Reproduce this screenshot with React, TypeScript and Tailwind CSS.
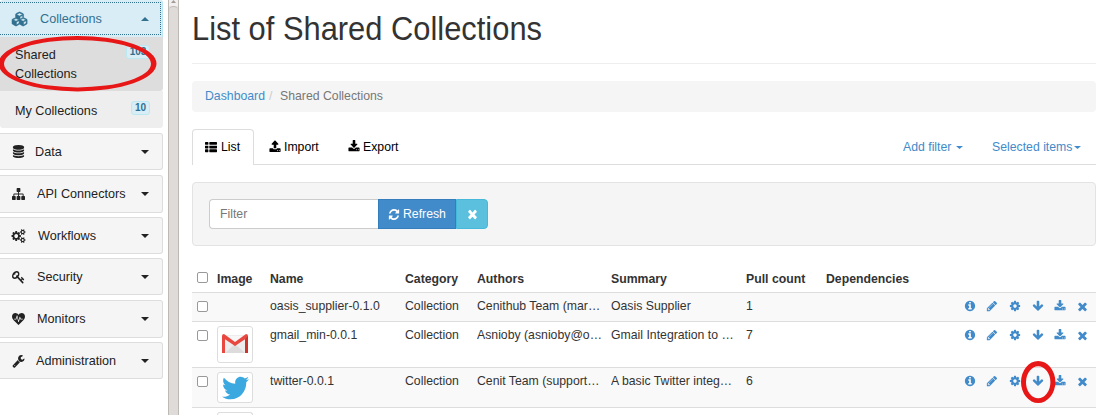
import React from "react";
import { FaTwitter } from "react-icons/fa";

const COG_LARGE =
  "M832 896q0-106-75-181t-181-75-181 75-75 181 75 181 181 75 181-75 75-181zm768 512q0-52-38-90t-90-38-90 38-38 90q0 53 37.5 90.5t90.5 37.5 90.5-37.5 37.5-90.5zm0-1024q0-52-38-90t-90-38-90 38-38 90q0 53 37.5 90.5t90.5 37.5 90.5-37.5 37.5-90.5zm-384 421v185q0 10-7 19.5t-16 10.5l-155 24q-11 35-32 76 34 48 90 115 7 11 7 20 0 12-7 19-23 30-82.5 89.5t-78.5 59.5q-11 0-21-7l-115-90q-37 19-77 31-11 108-23 155-7 24-30 24h-186q-11 0-20-7.5t-10-17.5l-23-153q-34-10-75-31l-118 89q-7 7-20 7-11 0-21-8-144-133-144-160 0-9 7-19 10-14 41-53t47-61q-23-44-35-82l-152-24q-10-1-17-9.5t-7-19.5v-185q0-10 7-19.5t16-10.5l155-24q11-35 32-76-34-48-90-115-7-11-7-20 0-12 7-20 22-30 82-89t79-59q11 0 21 7l115 90q34-18 77-32 11-108 23-154 7-24 30-24h186q11 0 20 7.5t10 17.5l23 153q34 10 75 31l118-89q8-7 20-7 11 0 21 8 144 133 144 160 0 8-7 19-12 16-42 54t-45 60q23 48 34 82l152 23q10 2 17 10.5t7 19.5z";
const COG_SMALL =
  "v140q0 16-149 31-12 27-30 52 51 113 51 138 0 4-4 7-122 71-124 71-8 0-46-47t-52-68q-20 2-30 2t-30-2q-14 21-52 68t-46 47q-2 0-124-71-4-3-4-7 0-25 51-138-18-25-30-52-149-15-149-31v-140q0-16 149-31 13-29 30-52-51-113-51-138 0-4 4-7 4-2 35-20t59-34 30-16q8 0 46 46.5t52 67.5q20-2 30-2t30 2q51-71 92-112l6-2q4 0 124 70 4 3 4 7 0 25-51 138 17 23 30 52 149 15 149 31z";
const DISC = "q237 0 443-43t325-127v170q0 69-103 128t-280 93.5-385 34.5-385-34.5-280-93.5-103-128v-170q119 84 325 127t443 43z";

const ICONS = {
  cubes: {
    w: 2304,
    d: "M640 1632l384-192v-314l-384 164v342zm-64-454l404-173-404-173-404 173zm1088 454l384-192v-314l-384 164v342zm-64-454l404-173-404-173-404 173zm-448-293l384-165v-266l-384 164v267zm-64-379l441-189-441-189-441 189zm1088 518v416q0 36-19 67t-52 47l-448 224q-25 14-57 14t-57-14l-448-224q-4-2-7-4-2 2-7 4l-448 224q-25 14-57 14t-57-14l-448-224q-33-16-52-47t-19-67v-416q0-38 21.5-70t56.5-48l434-186v-400q0-38 21.5-70t56.5-48l448-192q23-10 50-10t50 10l448 192q35 16 56.5 48t21.5 70v400l434 186q36 16 57 48t21 70z",
  },
  database: {
    w: 1792,
    d: `M896 768${DISC}M896 1536${DISC}M896 1152${DISC}M896 0q208 0 385 34.5t280 93.5 103 128v128q0 69-103 128t-280 93.5-385 34.5-385-34.5-280-93.5-103-128v-128q0-69 103-128t280-93.5 385-34.5z`,
  },
  sitemap: {
    w: 1792,
    d: "M1792 1248v320q0 40-28 68t-68 28h-320q-40 0-68-28t-28-68v-320q0-40 28-68t68-28h96v-192h-512v192h96q40 0 68 28t28 68v320q0 40-28 68t-68 28h-320q-40 0-68-28t-28-68v-320q0-40 28-68t68-28h96v-192h-512v192h96q40 0 68 28t28 68v320q0 40-28 68t-68 28h-320q-40 0-68-28t-28-68v-320q0-40 28-68t68-28h96v-192q0-52 38-90t90-38h512v-192h-96q-40 0-68-28t-28-68v-320q0-40 28-68t68-28h320q40 0 68 28t28 68v320q0 40-28 68t-68 28h-96v192h512q52 0 90 38t38 90v192h96q40 0 68 28t28 68z",
  },
  cogs: { w: 1920, d: `${COG_LARGE}M1856 1338${COG_SMALL}M1856 314${COG_SMALL}` },
  key: {
    w: 1792,
    d: "M832 512q0-80-56-136t-136-56-136 56-56 136q0 42 19 83-41-19-83-19-80 0-136 56t-56 136 56 136 136 56 136-56 56-136q0-42-19-83 41 19 83 19 80 0 136-56t56-136zm851 704q0 17-49 66t-66 49q-9 0-28.5-16t-36.5-33-38.5-40-24.5-26l-96 96 220 220q28 28 28 68 0 42-39 81t-81 39q-40 0-68-28l-671-671q-176 131-365 131-163 0-265.5-102.5t-102.5-265.5q0-160 95-313t248-248 313-95q163 0 265.5 102.5t102.5 265.5q0 189-131 365l355 355 96-96q-3-3-26-24.5t-40-38.5-33-36.5-16-28.5q0-17 49-66t66-49q13 0 23 10 6 6 46 44.5t82 79.5 86.5 86 73 78 28.5 41z",
  },
  heartbeat: {
    w: 1792,
    d: "M896 1664q-26 0-44-18l-624-602Q0 790 0 596 0 376 127 252t351-124q62 0 126.5 21.5t120 58 95.5 68.5 76 68q36-36 76-68t95.5-68.5 120-58 126.5-21.5q224 0 351 124t127 344q0 221-229 450l-623 600q-18 18-44 18zM300 860V960H600L700 640L860 1290L940 1290L1090 790L1160 960H1480V860H1220L1110 600H1050L900 1080L740 440H660L530 860Z",
  },
  wrench: {
    w: 1792,
    d: "M448 1472q0-26-19-45t-45-19-45 19-19 45 19 45 45 19 45-19 19-45zm644-420l-682 682q-37 37-90 37-52 0-91-37l-106-108q-38-36-38-90 0-53 38-91l681-681q39 98 114.5 173.5t173.5 114.5zm634-435q0 39-23 106-47 134-164.5 217.5t-258.5 83.5q-185 0-316.5-131.5t-131.5-316.5 131.5-316.5 316.5-131.5q58 0 121.5 16.5t107.5 46.5q16 11 16 28t-16 28l-293 169v224l193 107q5-3 79-48.5t135.5-81 70.5-35.5q15 0 23.5 10t8.5 25z",
  },
  list: {
    w: 1792,
    d: [224, 736, 1248]
      .map(
        (y) =>
          `M512 ${y}v192q0 40-28 68t-68 28h-320q-40 0-68-28t-28-68v-192q0-40 28-68t68-28h320q40 0 68 28t28 68zM1792 ${y}v192q0 40-28 68t-68 28h-960q-40 0-68-28t-28-68v-192q0-40 28-68t68-28h960q40 0 68 28t28 68z`,
      )
      .join(""),
  },
  upload: {
    w: 1792,
    d: "M1344 1472q0-26-19-45t-45-19-45 19-19 45 19 45 45 19 45-19 19-45zm256 0q0-26-19-45t-45-19-45 19-19 45 19 45 45 19 45-19 19-45zm128-224v320q0 40-28 68t-68 28h-1472q-40 0-68-28t-28-68v-320q0-40 28-68t68-28h427q21 56 70.5 92t110.5 36h256q61 0 110.5-36t70.5-92h427q40 0 68 28t28 68zm-325-648q-17 40-59 40h-256v448q0 26-19 45t-45 19h-256q-26 0-45-19t-19-45v-448h-256q-42 0-59-40-17-39 14-69l448-448q18-19 45-19t45 19l448 448q31 30 14 69z",
  },
  download: {
    w: 1792,
    d: "M1344 1344q0-26-19-45t-45-19-45 19-19 45 19 45 45 19 45-19 19-45zm256 0q0-26-19-45t-45-19-45 19-19 45 19 45 45 19 45-19 19-45zm128-224v320q0 40-28 68t-68 28h-1472q-40 0-68-28t-28-68v-320q0-40 28-68t68-28h465l135 136q58 56 136 56t136-56l136-136h464q40 0 68 28t28 68zm-325-569q17 41-14 70l-448 448q-18 19-45 19t-45-19l-448-448q-31-29-14-70 17-39 59-39h256v-448q0-26 19-45t45-19h256q26 0 45 19t19 45v448h256q42 0 59 39z",
  },
  refresh: {
    w: 1792,
    d: "M1639 1056q0 5-1 7-64 268-268 434.5t-478 166.5q-146 0-282.5-55t-243.5-157l-129 129q-19 19-45 19t-45-19-19-45v-448q0-26 19-45t45-19h448q26 0 45 19t19 45-19 45l-137 137q71 66 161 102t187 36q134 0 250-65t186-179q11-17 53-117 8-23 30-23h192q13 0 22.5 9.5t9.5 22.5zm25-800v448q0 26-19 45t-45 19h-448q-26 0-45-19t-19-45 19-45l138-138q-148-137-349-137-134 0-250 65t-186 179q-11 17-53 117-8 23-30 23h-199q-13 0-22.5-9.5t-9.5-22.5v-7q65-268 270-434.5t480-166.5q146 0 284 55.5t245 156.5l130-129q19-19 45-19t45 19 19 45z",
  },
  times: {
    w: 1792,
    d: "M1490 1322q0 40-28 68l-136 136q-28 28-68 28t-68-28l-294-294-294 294q-28 28-68 28t-68-28l-136-136q-28-28-28-68t28-68l294-294-294-294q-28-28-28-68t28-68l136-136q28-28 68-28t68 28l294 294 294-294q28-28 68-28t68 28l136 136q28 28 28 68t-28 68l-294 294 294 294q28 28 28 68z",
  },
  info: {
    w: 1792,
    d: "M1152 1376v-160q0-14-9-23t-23-9h-96v-512q0-14-9-23t-23-9h-320q-14 0-23 9t-9 23v160q0 14 9 23t23 9h96v320h-96q-14 0-23 9t-9 23v160q0 14 9 23t23 9h448q14 0 23-9t9-23zm-128-896v-160q0-14-9-23t-23-9h-192q-14 0-23 9t-9 23v160q0 14 9 23t23 9h192q14 0 23-9t9-23zm640 416q0 209-103 385.5t-279.5 279.5-385.5 103-385.5-103-279.5-279.5-103-385.5 103-385.5 279.5-279.5 385.5-103 385.5 103 279.5 279.5 103 385.5z",
  },
  pencil: {
    w: 1792,
    d: "M491 1536l91-91-235-235-91 91v107h128v128h107zm523-928q0-22-22-22-10 0-17 7l-542 542q-7 7-7 17 0 22 22 22 10 0 17-7l542-542q7-7 7-17zm-54-192l416 416-832 832h-416v-416zm683 96q0 53-37 90l-166 166-416-416 166-165q36-38 90-38 53 0 91 38l235 234q37 39 37 91z",
  },
  cog: {
    w: 1792,
    d: "M1152 896q0-106-75-181t-181-75-181 75-75 181 75 181 181 75 181-75 75-181zm512-109v222q0 12-8 23t-20 13l-185 28q-19 54-39 91 35 50 107 138 10 12 10 25t-9 23q-27 37-99 108t-94 71q-12 0-26-9l-138-108q-44 23-91 38-16 136-29 186-7 28-36 28h-222q-14 0-24.5-8.5t-11.5-21.5l-28-184q-49-16-90-37l-141 107q-10 9-25 9-14 0-25-11-126-114-165-168-7-10-7-23 0-12 8-23 15-21 51-66.5t54-70.5q-27-50-41-99l-183-27q-13-2-21-12.5t-8-23.5v-222q0-12 8-23t19-13l186-28q14-46 39-92-40-57-107-138-10-12-10-24 0-10 9-23 26-36 98.5-107.5t94.5-71.5q13 0 26 10l138 107q44-23 91-38 16-136 29-186 7-28 36-28h222q14 0 24.5 8.5t11.5 21.5l28 184q49 16 90 37l142-107q9-9 24-9 13 0 25 10 129 119 165 170 7 8 7 22 0 12-8 23-15 21-51 66.5t-54 70.5q26 50 41 98l183 28q13 2 21 12.5t8 23.5z",
  },
  arrowDown: {
    w: 1792,
    d: "M1675 832q0 53-37 90l-651 652q-39 37-91 37-53 0-90-37l-651-652q-38-36-38-90 0-53 38-91l74-75q39-37 91-37 53 0 90 37l294 294v-704q0-52 38-90t90-38h128q52 0 90 38t38 90v704l294-294q37-37 90-37 52 0 91 37l75 75q37 39 37 91z",
  },
};

type IconName = keyof typeof ICONS;

function Icon({ name, className }: { name: IconName; className: string }) {
  const icon = ICONS[name];
  return (
    <svg viewBox={`0 0 ${icon.w} 1792`} preserveAspectRatio="none" fill="currentColor" fillRule={name === "heartbeat" ? "evenodd" : "nonzero"} className={`shrink-0 overflow-visible ${className}`}>
      <path d={icon.d} />
    </svg>
  );
}

// Slightly condensed run of text, anchored to its left edge.
function T({ children, className = "" }: { children: React.ReactNode; className?: string }) {
  return <span className={`inline-block origin-left scale-x-[0.93] whitespace-nowrap ${className}`}>{children}</span>;
}

function Caret({ up = false, className = "w-2 h-1" }: { up?: boolean; className?: string }) {
  return (
    <svg viewBox="0 0 8 4" preserveAspectRatio="none" fill="currentColor" className={`shrink-0 ${className}`}>
      <path d={up ? "M0 4L4 0L8 4Z" : "M0 0H8L4 4Z"} />
    </svg>
  );
}

const MENU: { icon: IconName; size: string; label: string; pad: string; box: string }[] = [
  { icon: "database", size: "w-[13px] h-[13px]", label: "Data", pad: "pl-[35px]", box: "h-[37px] mb-[5px]" },
  { icon: "sitemap", size: "w-[13px] h-[14px]", label: "API Connectors", pad: "pl-[37px] pb-[2px]", box: "h-[38px] mb-[4px]" },
  { icon: "cogs", size: "w-[14px] h-[14px]", label: "Workflows", pad: "pl-[38px]", box: "h-[37px] mb-[4px]" },
  { icon: "key", size: "w-[13px] h-[14px]", label: "Security", pad: "pl-[37px]", box: "h-[37px] mb-[5px]" },
  { icon: "heartbeat", size: "w-[13px] h-[14px]", label: "Monitors", pad: "pl-[37px] pb-[2px]", box: "h-[38px] mb-[4px]" },
  { icon: "wrench", size: "w-[13px] h-[14px]", label: "Administration", pad: "pl-[36px]", box: "h-[37px]" },
];

function Sidebar() {
  return (
    <nav className="relative w-[163px] shrink-0 text-[13.6px] leading-[19px] text-[#222]">
      <div className="h-[37px] rounded-t-[3px] bg-[#d9edf7] pt-[2px] border-r border-[#bce8f1]">
        <div className="relative flex h-[33px] w-[161px] items-center border border-l-0 border-dotted border-[#31708f] pl-[40px] text-[#31708f]">
          <Icon name="cubes" className="absolute left-[12px] top-[9px] h-[14px] w-[16px] stroke-current stroke-[70]" />
          <T>Collections</T>
          <Caret up className="absolute right-[11px] top-[14px] h-[4px] w-[8px]" />
        </div>
      </div>
      <div className="flex h-[54px] items-start rounded-br-[3px] bg-[#ddd] pl-[15px] pt-[8px]">
        <T className="!whitespace-pre">{"Shared\nCollections"}</T>
        <span className="absolute left-[126px] top-[45px] h-[14px] w-[24px] rounded-[3px] border border-[#bce8f1] bg-[#d9edf7] text-center text-[10px] font-bold leading-[12px] text-[#31708f]">103</span>
      </div>
      <div className="relative flex h-[37px] items-center rounded-b-[3px] bg-[#eee] pl-[15px] pt-[2px]">
        <T>My Collections</T>
        <span className="absolute left-[131px] top-[10px] h-[14px] w-[19px] rounded-[3px] border border-[#bce8f1] bg-[#d9edf7] text-center text-[10px] font-bold leading-[12px] text-[#31708f]">10</span>
      </div>
      <div className="mt-[5px] flex flex-col">
        {MENU.map((m) => (
          <div key={m.label} className={`relative flex items-center rounded-r-[3px] border border-l-0 border-[#ddd] bg-[#f5f5f5] ${m.box} ${m.pad}`}>
            <Icon name={m.icon} className={`absolute left-[12px] top-[11px] ${m.size}`} />
            <T>{m.label}</T>
            <Caret className="absolute right-[13px] top-[16px] h-[4px] w-[8px]" />
          </div>
        ))}
      </div>
    </nav>
  );
}

function Scrollbar() {
  return (
    <div className="ml-[5px] flex w-[11px] shrink-0 flex-col border-x border-[#bdb9b5] bg-[#e4e2e0]">
      <div className="flex h-[6px] items-start justify-center bg-[#f1f0ef]">
        <Caret up className="h-[3px] w-[5px] text-[#a09c98]" />
      </div>
      <div className="flex-1 rounded-t-[5px] border-t border-[#bdb9b5] bg-[#dedbd9]" />
    </div>
  );
}

const GRID = "grid grid-cols-[25px_53px_135px_72px_134px_135px_80px_138px_1fr]";

function Box() {
  return <span className="ml-[5px] block h-[11px] w-[11px] rounded-[2px] border border-[#999] bg-white" />;
}

function GmailLogo() {
  return (
    <svg viewBox="0 0 26 20" className="mb-[1px] h-[20px] w-[26px]">
      <rect x="1" y="1" width="24" height="18" rx="1" fill="#ededed" />
      <path d="M3 19L13 10L23 19Z" fill="#dcdcdc" />
      <path d="M3 2L13 10L23 2Z" fill="#f7f7f7" />
      <path d="M0 2Q0 0 2 0L13 8L24 0Q26 0 26 2V19H23V5.2L13 12L3 5.2V19H0Z" fill="#e8483f" />
      <path d="M23 5.2L26 2V19H23Z" fill="#cc352c" />
    </svg>
  );
}

const ROWS = [
  { name: "oasis_supplier-0.1.0", authors: "Cenithub Team (mar…", summary: "Oasis Supplier", pulls: "1", box: "h-[29px] bg-[#f9f9f9]", logo: null },
  { name: "gmail_min-0.0.1", authors: "Asnioby (asnioby@o…", summary: "Gmail Integration to …", pulls: "7", box: "h-[46px]", logo: "gmail" },
  { name: "twitter-0.0.1", authors: "Cenit Team (support…", summary: "A basic Twitter integ…", pulls: "6", box: "h-[40px] bg-[#f9f9f9]", logo: "twitter" },
];

function Actions() {
  return (
    <div className="flex items-start pt-[3px] text-[#428bca]">
      <Icon name="info" className="mr-[10px] h-[12px] w-[12px]" />
      <Icon name="pencil" className="mr-[11px] h-[12px] w-[12px]" />
      <Icon name="cog" className="mr-[11px] h-[12px] w-[12px]" />
      <Icon name="arrowDown" className="mr-[10px] h-[12px] w-[12px]" />
      <Icon name="download" className="mr-[10px] h-[12px] w-[12px]" />
      <Icon name="times" className="h-[13px] w-[13px]" />
    </div>
  );
}

function Table() {
  return (
    <div className="mt-[19px] leading-[18px]">
      <div className={`${GRID} h-[27px] pt-[5px] font-bold`}>
        <div className="pt-[2px]"><Box /></div>
        <T>Image</T>
        <T>Name</T>
        <T>Category</T>
        <T>Authors</T>
        <T>Summary</T>
        <T>Pull count</T>
        <T>Dependencies</T>
        <span />
      </div>
      {ROWS.map((r) => (
        <div key={r.name} className={`${GRID} border-t border-[#ddd] pt-[4px] ${r.box}`}>
          <div className="pt-[4px]"><Box /></div>
          <div>
            {r.logo && (
              <div className={`flex w-[36px] items-center justify-center rounded-[3px] border border-[#ddd] bg-white ${r.logo === "gmail" ? "h-[37px]" : "h-[31px]"}`}>
                {r.logo === "gmail" ? <GmailLogo /> : <FaTwitter preserveAspectRatio="none" className="h-[28px] w-[27px] text-[#3ba9e0]" />}
              </div>
            )}
          </div>
          <T>{r.name}</T>
          <T>Collection</T>
          <T>{r.authors}</T>
          <T>{r.summary}</T>
          <T>{r.pulls}</T>
          <span />
          <Actions />
        </div>
      ))}
      <div className="h-[8px] border-t border-[#ddd] pl-[25px] pt-[4px]">
        <div className="h-[10px] w-[36px] rounded-t-[3px] border border-b-0 border-[#ddd]" />
      </div>
    </div>
  );
}

export default function App() {
  return (
    <div className="relative flex h-[415px] w-[1100px] overflow-hidden bg-white font-['Liberation_Sans',Arial,sans-serif] text-[13.2px] text-[#333]">
      <Sidebar />
      <Scrollbar />
      <main className="ml-[13px] w-[904px]">
        <h1 className="h-[64px] border-b border-[#eee] pt-[9px] text-[33.2px] leading-[40px]">
          <T>List of Shared Collections</T>
        </h1>
        <div className="mt-[17px] flex h-[31px] items-center rounded-[4px] bg-[#f5f5f5] pb-[1px] pl-[13px]">
          <T className="w-[64px] text-[#428bca]">Dashboard</T>
          <T className="w-[11px] text-[#ccc]">/</T>
          <T className="text-[#777]">Shared Collections</T>
        </div>
        <div className="mt-[17px] flex h-[36px] border-b border-[#ddd] text-black">
          <div className="flex h-[36px] w-[62px] items-center rounded-t-[4px] border border-b-0 border-[#ddd] bg-white pb-[1px] pl-[12px]">
            <Icon name="list" className="mr-[4px] h-[13px] w-[12px]" />
            <T>List</T>
          </div>
          <div className="flex w-[79px] items-center pl-[15px]">
            <Icon name="upload" className="mr-[3px] h-[13px] w-[12px]" />
            <T>Import</T>
          </div>
          <div className="flex w-[570px] items-center pl-[15px]">
            <Icon name="download" className="mr-[3px] h-[13px] w-[12px]" />
            <T>Export</T>
          </div>
          <div className="flex w-[89px] items-center text-[#428bca]">
            <T className="w-[53px]">Add filter</T>
            <Caret className="mt-[2px] h-[3px] w-[7px]" />
          </div>
          <div className="flex items-center text-[#428bca]">
            <T className="w-[82px]">Selected items</T>
            <Caret className="mt-[2px] h-[3px] w-[7px]" />
          </div>
        </div>
        <div className="mt-[17px] flex h-[64px] rounded-[4px] border border-[#e3e3e3] bg-[#f5f5f5] pl-[16px] pt-[16px]">
          <div className="flex h-[30px] w-[169px] items-center rounded-l-[4px] border border-r-0 border-[#ccc] bg-white pl-[10px] text-[#777]">
            <T>Filter</T>
          </div>
          <div className="flex h-[30px] w-[78px] items-center border border-[#357ebd] bg-[#428bca] pl-[9px] text-white">
            <Icon name="refresh" className="mr-[3px] h-[13px] w-[12px]" />
            <T>Refresh</T>
          </div>
          <div className="flex h-[30px] w-[32px] items-center justify-center rounded-r-[4px] border border-[#46b8da] bg-[#5bc0de] text-white">
            <Icon name="times" className="h-[14px] w-[13px]" />
          </div>
        </div>
        <Table />
      </main>
      <svg viewBox="0 0 1100 415" className="pointer-events-none absolute inset-0 h-[415px] w-[1100px]" fill="#e81717" fillRule="evenodd">
        <path d="M-1.5 63.7a79 27.7 0 1 0 158 0a79 27.7 0 1 0 -158 0ZM4 63.7a73.5 23.7 0 1 0 147 0a73.5 23.7 0 1 0 -147 0Z" />
        <path d="M1021 382a17.2 21 0 1 0 34.4 0a17.2 21 0 1 0 -34.4 0ZM1026 382.3a12.2 16 0 1 0 24.4 0a12.2 16 0 1 0 -24.4 0Z" />
      </svg>
    </div>
  );
}
